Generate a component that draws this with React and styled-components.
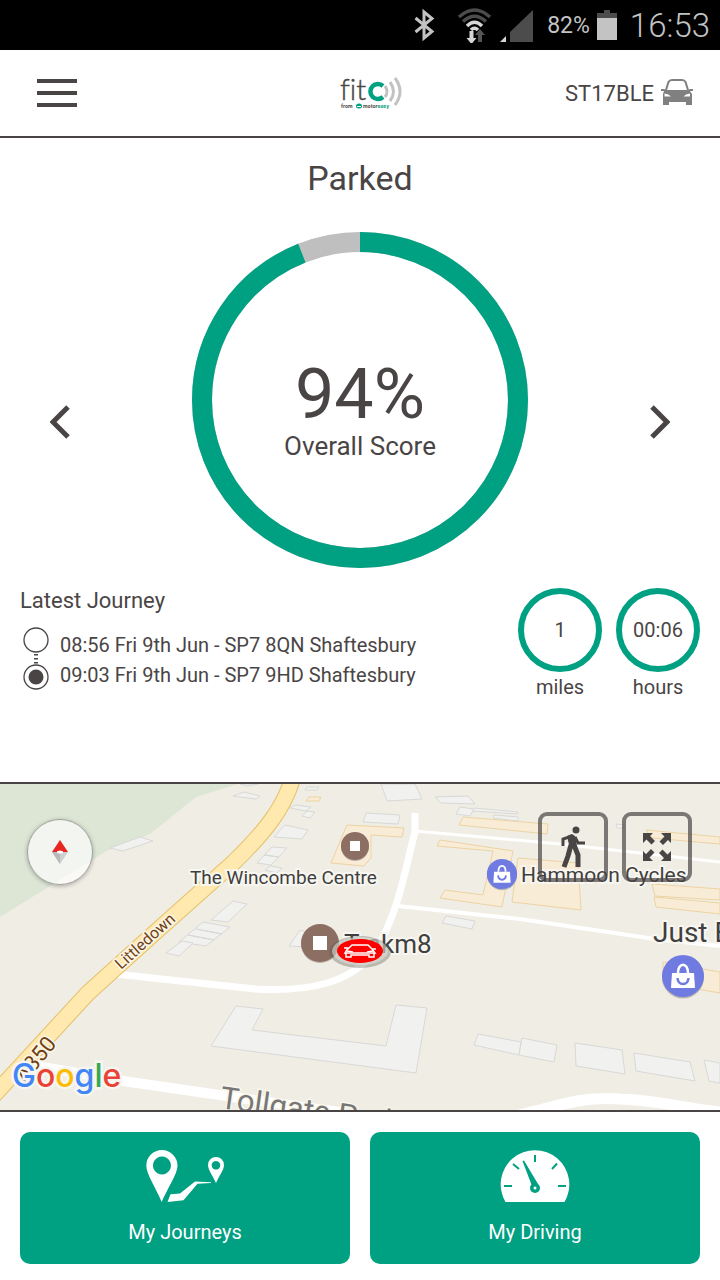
import React from "react";
import styled, { createGlobalStyle } from "styled-components";

const green = "#00a082";
const dark = "#4a4545";
const score = 94;

const journey = [
  "08:56 Fri 9th Jun - SP7 8QN Shaftesbury",
  "09:03 Fri 9th Jun - SP7 9HD Shaftesbury",
];

const stats = [
  { value: "1", label: "miles" },
  { value: "00:06", label: "hours" },
];

const greyBuildings = [
  "110,848 140,837 153,841 123,851",
  "233,796 244,792 260,796 256,799",
  "240,784 247,786 258,784",
  "305,790 307,787 319,787 317,790",
  "290,808 295,805 311,807 306,811",
  "302,816 307,811 315,812 310,818",
  "274,837 285,825 308,830 302,839",
  "257,863 272,847 287,848 271,865",
  "264,855 279,857",
  "265,870 270,866 282,868 277,873",
  "211,920 233,901 247,904 228,922",
  "179,942 203,922 230,927 206,946",
  "196,929 222,934",
  "188,935 214,940",
  "166,953 182,941 193,943 179,956",
  "381,784 415,784 422,799 387,801",
  "435,797 441,803 475,804 468,796",
  "363,822 366,813 400,815 398,824",
  "456,814 460,807 474,809 470,816",
  "474,808 518,812 518,814 473,811",
  "493,818 494,815 518,817 518,821",
  "616,824 624,825 624,828 617,828",
  "442,923 446,916 475,921 472,929",
  "289,946 300,930 312,934 309,947",
  "211,1046 236,1006 263,1009 252,1030 386,1046 396,1005 427,1008 416,1073",
  "474,1045 478,1034 521,1042 519,1055",
  "519,1055 522,1038 557,1045 554,1062",
  "576,1066 575,1043 622,1050 625,1074",
  "636,1071 634,1053 690,1062 695,1081",
  "709,1081 704,1060 720,1063 720,1083",
];

const shopBuildings = [
  "306,801 309,797 321,797 319,801",
  "331,863 347,825 404,828 402,837 371,835 371,858 364,866",
  "459,825 463,817 548,824 547,834",
  "437,846 440,840 513,851 502,907 440,898 445,890 483,895 493,851",
  "512,902 518,858 578,863 581,910",
  "646,830 720,837 720,844 652,838",
  "652,884 720,889 720,900 655,896",
  "654,897 720,903 720,914 656,907",
  "663,962 720,972 720,993 663,983",
];

const googleLetters = [
  ["G", "#4285f4"],
  ["o", "#ea4335"],
  ["o", "#fbbc05"],
  ["g", "#4285f4"],
  ["l", "#34a853"],
  ["e", "#ea4335"],
];

const StatusIcons = () => (
  <svg width="120" height="36" viewBox="0 0 120 36" aria-hidden="true">
    <path
      d="M1.500 11 L18 24.500 L10 31 V5 L18 11.500 L1.500 25"
      fill="none"
      stroke="#c3c3c3"
      strokeWidth="3"
    />
    <g fill="none" strokeWidth="3.500">
      <path d="M45 10 Q60.500 -4 76 10" stroke="#4c4c4c" />
      <path d="M49 14.500 Q60.500 4 72 14.500" stroke="#4c4c4c" />
      <path d="M53 19 Q60.500 11.500 68 19" stroke="#d6d6d6" />
      <path d="M57 23 Q60.500 19.500 64 23" stroke="#d6d6d6" />
    </g>
    <path d="M55.500 24 h4 v7 h3 l-5 6 l-5 -6 h3z" fill="#d6d6d6" />
    <path d="M64 35 h4 v-7 h3 l-5 -6 l-5 6 h3z" fill="#555" />
    <path d="M96 35 V25 L119 3 V35z" fill="#4c4c4c" />
    <path d="M86 35 L92 29 V35z" fill="#d6d6d6" />
  </svg>
);

const Logo = () => (
  <LogoSvg viewBox="0 0 62 36" role="img" aria-label="fit C from motoreasy">
    <LogoName x="0" y="25" stroke={dark} strokeWidth="0.4">
      fit
    </LogoName>
    <path d="M43 11 A7.500 7.500 0 1 0 43 22" fill="none" stroke={green} strokeWidth="4.500" />
    <g fill="none" stroke="#c2c2c2" strokeWidth="3">
      <path d="M45 11 Q49 16.500 45 22" />
      <path d="M50 7 Q57 16.500 50 26" />
      <path d="M55 3 Q65 16.500 55 30" />
    </g>
    <LogoTag x="1" y="33">
      from
    </LogoTag>
    <ellipse cx="19" cy="31" rx="3" ry="2.500" fill={green} />
    <path d="M17 31.500 h4" stroke="#fff" strokeWidth="1" />
    <LogoTag x="23" y="33">
      motor<tspan fill={green}>easy</tspan>
    </LogoTag>
  </LogoSvg>
);

const CarIcon = () => (
  <svg width="32" height="28" viewBox="0 0 32 28" aria-hidden="true">
    <path
      d="M5 11 L7.500 3 Q8.500 1 11 1 H21 Q23.500 1 24.500 3 L27 11"
      fill="none"
      stroke="#808080"
      strokeWidth="2"
    />
    <path
      fillRule="evenodd"
      fill="#808080"
      d="M0 10 L3 10 L5 11 H27 L29 10 L32 10 V12 H29 L31 15 V26 H25 V23 H8 V26 H2 V15 L3 12 H0z M3.500 14.500 V17.500 H10 Q8 15 3.500 14.500z M29 14.500 V17.500 H22.500 Q24.500 15 29 14.500z"
    />
  </svg>
);

const JourneysIcon = () => (
  <svg width="78" height="52" viewBox="0 0 78 52" fill="#fff" aria-hidden="true">
    <path
      fillRule="evenodd"
      d="M16 0 A15.700 15.700 0 0 0 0.300 15.700 C0.300 24 10 38 15.700 52 C21.500 38 31.500 24 31.500 15.700 A15.700 15.700 0 0 0 16 0z M16 6.500 A9 9 0 1 1 15.900 6.500z"
    />
    <path
      fillRule="evenodd"
      d="M70 7 A8 8 0 0 0 62 15 C62 20 67 26 70 33 C73 26 78 20 78 15 A8 8 0 0 0 70 7z M70 11 A4.300 4.300 0 1 1 69.900 11z"
    />
    <path d="M21.500 52 L24.500 44.300 L34 43.500 L49 31.500 L65 32.300 V33 L51.500 33.700 L37.500 50.300z" />
  </svg>
);

const DrivingIcon = () => (
  <svg width="70" height="52" viewBox="0 0 70 52" aria-hidden="true">
    <path d="M5.500 52 A34.300 34.300 0 1 1 64.500 52z" fill="#fff" />
    <g stroke={green} strokeWidth="2">
      <path d="M35 5 V12 M4 36 H12 M58 36 H66 M13 14 L19 19 M57 13.500 L52 19" />
    </g>
    <path d="M22.500 11 L24 10.500 L38 34 L32 36z" fill={green} />
    <circle cx="35" cy="38" r="5" fill={green} />
    <circle cx="35" cy="38" r="1.500" fill="#fff" />
  </svg>
);

const Bag = ({ x, y, scale }) => (
  <g transform={`translate(${x} ${y}) scale(${scale})`}>
    <circle cy="1.500" r="21" fill="#b9b6b0" />
    <circle r="21" fill="#6f7be0" />
    <path d="M-11 -3 H11 L12 12 H-12z" fill="#fff" />
    <path d="M-5 -3 C-5 -14 5 -14 5 -3" fill="none" stroke="#fff" strokeWidth="2.500" />
    <path d="M-5.500 2 Q-5 8 0 8 Q5 8 5.500 2" fill="none" stroke="#6f7be0" strokeWidth="2.500" />
  </g>
);

const Place = ({ x, y, r, size }) => (
  <g>
    <circle cx={x} cy={y + 1} r={r} fill="#b9b1ab" />
    <circle cx={x} cy={y} r={r} fill="#8d6e63" />
    <rect x={x - size / 2} y={y - size / 2} width={size} height={size} fill="#fff" />
  </g>
);

const MapView = () => (
  <MapSvg viewBox="0 784 720 326" preserveAspectRatio="xMidYMid slice">
    <rect y="784" width="720" height="326" fill="#efede4" />
    <path d="M0 784 H238 L196 797 L150 834 L108 850 L0 917z" fill="#dde6d5" />
    <g fill="#f1f1ef" stroke="#d8d8d6">
      {greyBuildings.map((points) => (
        <polygon key={points} points={points} />
      ))}
    </g>
    <g fill="#f9ecd6" stroke="#ecd3a2">
      {shopBuildings.map((points) => (
        <polygon key={points} points={points} />
      ))}
    </g>
    <g fill="none" stroke="#fff">
      <path
        d="M115 974 L255 989 C310 992 352 983 376 950 C400 910 407 860 415 832 V813"
        strokeWidth="7"
      />
      <path d="M415 831 L560 844 L720 862" strokeWidth="3" />
      <path d="M398 906 L520 919 L655 939 L720 946" strokeWidth="4" />
      <path d="M30 1065 L130 1082 L240 1098 L340 1112" strokeWidth="10" />
      <path d="M505 1118 C560 1107 575 1096 620 1099 C665 1101 675 1107 720 1112" strokeWidth="11" />
    </g>
    <path
      d="M292 780 C284 808 264 833 234 862 L160 928 L88 993 L-6 1095"
      fill="none"
      stroke="#e5c06a"
      strokeWidth="17"
    />
    <path
      d="M292 780 C284 808 264 833 234 862 L160 928 L88 993 L-6 1095"
      fill="none"
      stroke="#ffe9ae"
      strokeWidth="15"
    />
    <RoadName transform="translate(121 970) rotate(-42)" fontSize="16" fill="#703f12">
      Littledown
    </RoadName>
    <RoadName transform="translate(25 1084) rotate(-51)" fontSize="22" fill="#703f12">
      A350
    </RoadName>
    <RoadName transform="translate(219 1108) rotate(8)" fontSize="31" fill="#777">
      Tollgate Park
    </RoadName>

    <Place x={355} y={846} r={14} size={10} />
    <PlaceName x="190" y="884" fontSize="19">
      The Wincombe Centre
    </PlaceName>
    <Bag x={502} y={874} scale={0.72} />
    <PlaceName x="521" y="882" fontSize="21">
      Hammoon Cycles
    </PlaceName>
    <Bag x={683} y={976} scale={1} />
    <PlaceName x="653" y="942" fontSize="28">
      Just Eat
    </PlaceName>
    <Place x={320} y={943} r={19} size={14} />
    <PlaceName x="344" y="953" fontSize="26">
      Trakm8
    </PlaceName>

    <ellipse cx="360" cy="952" rx="31" ry="16" fill="#5a5a50" fillOpacity="0.350" />
    <ellipse cx="360" cy="951" rx="28" ry="14" fill="#e4e4dc" fillOpacity="0.550" />
    <ellipse cx="360" cy="951" rx="23" ry="12" fill="#f00" />
    <g fill="none" stroke="#fff" strokeWidth="1.500">
      <path d="M348 949 L352 945 H368 L372 949 M344 948 H348 L345 953 H375 L372 949 H376" />
      <path d="M346 953 V957 H351 V955 H369 V957 H374 V953 M347 951 L353 952 M373 951 L367 952" />
    </g>

    <GoogleName x="12" y="1087">
      {googleLetters.map(([letter, color], index) => (
        <tspan key={index} fill={color}>
          {letter}
        </tspan>
      ))}
    </GoogleName>
  </MapSvg>
);

const App = () => (
  <Page>
    <GlobalStyle />
    <StatusBar>
      <StatusIcons />
      <Battery>82%</Battery>
      <svg width="20" height="30" viewBox="0 0 20 30" aria-hidden="true">
        <path d="M7 0 H13 V3 H20 V8 H0 V3 H7z" fill="#4c4c4c" />
        <path d="M0 8 H20 V30 H0z" fill="#c3c3c3" />
      </svg>
      <Clock>16:53</Clock>
    </StatusBar>

    <Header>
      <PlainButton aria-label="Menu">
        <svg width="40" height="28" viewBox="0 0 40 28">
          <path d="M0 2 H40 M0 14 H40 M0 26 H40" stroke={dark} strokeWidth="4" />
        </svg>
      </PlainButton>
      <Logo />
      <Vehicle>
        ST17BLE
        <CarIcon />
      </Vehicle>
    </Header>

    <Title>Parked</Title>

    <ScoreRow>
      <Arrow aria-label="Previous">
        <svg width="20" height="34" viewBox="0 0 20 34">
          <path d="M18 2 L3 17 L18 32" fill="none" stroke={dark} strokeWidth="5" />
        </svg>
      </Arrow>
      <Ring>
        <RingSvg viewBox="0 0 336 336" aria-hidden="true">
          <g fill="none" strokeWidth="20" transform="rotate(-90 168 168)">
            <circle cx="168" cy="168" r="158" stroke="#bfbfbf" />
            <circle
              cx="168"
              cy="168"
              r="158"
              stroke={green}
              pathLength="100"
              strokeDasharray={`${score} 100`}
            />
          </g>
        </RingSvg>
        <ScoreText>
          <ScoreValue>{score}%</ScoreValue>
          <ScoreLabel>Overall Score</ScoreLabel>
        </ScoreText>
      </Ring>
      <Arrow aria-label="Next">
        <svg width="20" height="34" viewBox="0 0 20 34">
          <path d="M2 2 L17 17 L2 32" fill="none" stroke={dark} strokeWidth="5" />
        </svg>
      </Arrow>
    </ScoreRow>

    <Latest>
      <div>
        <LatestTitle>Latest Journey</LatestTitle>
        <Route>
          <svg width="28" height="66" viewBox="0 0 28 66" fill="none" stroke={dark} aria-hidden="true">
            <circle cx="14" cy="14" r="12" strokeWidth="1.300" />
            <path d="M14 28 V38" strokeWidth="4" strokeDasharray="1.500 2.500" />
            <circle cx="14" cy="51" r="12" strokeWidth="1.300" />
            <circle cx="14" cy="51" r="7.500" fill={dark} stroke="none" />
          </svg>
          <Stops>
            {journey.map((stop) => (
              <li key={stop}>{stop}</li>
            ))}
          </Stops>
        </Route>
      </div>
      <Stats>
        {stats.map((stat) => (
          <Stat key={stat.label}>
            <StatRing>{stat.value}</StatRing>
            {stat.label}
          </Stat>
        ))}
      </Stats>
    </Latest>

    <MapPanel>
      <MapView />
      <Compass aria-label="Compass">
        <svg width="16" height="24" viewBox="0 0 16 24">
          <path d="M8 0 L16 12 H0z" fill="#e8251f" />
          <path d="M8 24 L16 12 H0z" fill="#cfcfcf" />
          <path d="M8 24 V12 H0z" fill="#b9b9b9" />
          <ellipse cx="8" cy="12" rx="3" ry="1.500" fill="#fff" />
        </svg>
      </Compass>
      <MapTools>
        <MapButton aria-label="Walk to vehicle">
          <svg width="26" height="42" viewBox="0 0 26 42" fill="none" stroke={dark}>
            <circle cx="16" cy="4" r="3.500" fill={dark} stroke="none" />
            <path d="M7 10 L12 8 L15 10 L17 21 L10 23z" fill={dark} stroke="none" />
            <path d="M12 10 L3 13 V20" strokeWidth="3" />
            <path d="M15 11 L18 17 H25" strokeWidth="3" />
            <path d="M11 19 L8 30 L4 41" strokeWidth="5" />
            <path d="M14 19 L18 29 V41" strokeWidth="5" />
          </svg>
        </MapButton>
        <MapButton aria-label="Full screen">
          <svg width="30" height="30" viewBox="0 0 30 30" fill={dark}>
            {[0, 90, 180, 270].map((angle) => (
              <path
                key={angle}
                transform={`rotate(${angle} 15 15)`}
                d="M1 1 H11 L8 4 L13 9 L9.500 12.500 L4.500 7.500 L1 11z"
              />
            ))}
          </svg>
        </MapButton>
      </MapTools>
    </MapPanel>

    <Actions>
      <Action>
        <JourneysIcon />
        My Journeys
      </Action>
      <Action>
        <DrivingIcon />
        My Driving
      </Action>
    </Actions>
  </Page>
);

const GlobalStyle = createGlobalStyle`
  * {
    box-sizing: border-box;
  }

  body {
    margin: 0;
    background: #fff;
    color: ${dark};
    font-family: Roboto, "Liberation Sans", sans-serif;
  }

  svg {
    display: block;
    flex-shrink: 0;
  }

  button {
    padding: 0;
    border: 0;
    background: none;
    color: inherit;
    font-family: inherit;
    cursor: pointer;
  }
`;

const Page = styled.div`
  display: flex;
  flex-direction: column;
  min-height: 100vh;
`;

const StatusBar = styled.div`
  display: flex;
  align-items: center;
  justify-content: flex-end;
  height: 50px;
  padding: 0 10px;
  background: #000;
  color: #c3c3c3;
`;

const Battery = styled.span`
  margin: 0 7px 0 13px;
  font-size: 23px;
`;

const Clock = styled.span`
  margin-left: 13px;
  font-size: 33px;
  font-weight: 300;
`;

const Header = styled.header`
  display: grid;
  grid-template-columns: 1fr auto 1fr;
  align-items: center;
  height: 88px;
  padding: 0 27px 0 37px;
  border-bottom: 2px solid ${dark};
`;

const PlainButton = styled.button`
  justify-self: start;
`;

const LogoSvg = styled.svg`
  width: 62px;
  height: 36px;
  margin-left: 12px;
  overflow: visible;
`;

const LogoName = styled.text`
  fill: ${dark};
  font-family: Lato, sans-serif;
  font-size: 29px;
  font-weight: 300;
  font-variant-ligatures: none;
`;

const LogoTag = styled.text`
  fill: ${dark};
  font-family: Inter, sans-serif;
  font-size: 5px;
  font-weight: 700;
`;

const Vehicle = styled.div`
  display: flex;
  align-items: center;
  justify-self: end;
  gap: 7px;
  font-size: 22px;
`;

const Title = styled.h1`
  margin: 20px 0 34px;
  font-size: 34px;
  font-weight: 400;
  line-height: 40px;
  text-align: center;
`;

const ScoreRow = styled.section`
  display: flex;
  align-items: center;
  justify-content: space-between;
  padding: 0 50px;
`;

const Arrow = styled.button`
  margin-top: 44px;
`;

const Ring = styled.div`
  display: grid;
  place-items: center;

  > * {
    grid-area: 1 / 1;
  }
`;

const RingSvg = styled.svg`
  width: 336px;
  height: 336px;
`;

const ScoreText = styled.div`
  padding-top: 20px;
  text-align: center;
`;

const ScoreValue = styled.div`
  font-size: 70px;
  line-height: 72px;
`;

const ScoreLabel = styled.div`
  font-size: 26px;
  line-height: 32px;
`;

const Latest = styled.section`
  display: flex;
  justify-content: space-between;
  padding: 20px 20px 80px;
`;

const LatestTitle = styled.h2`
  margin: 0 0 12px;
  font-size: 22px;
  font-weight: 400;
  line-height: 26px;
`;

const Route = styled.div`
  display: flex;
  gap: 10px;
  padding-left: 2px;
`;

const Stops = styled.ul`
  margin: 4px 0 0;
  padding: 0;
  list-style: none;
  font-size: 20px;
  line-height: 30px;
`;

const Stats = styled.div`
  display: flex;
  gap: 14px;
`;

const Stat = styled.div`
  font-size: 20px;
  line-height: 30px;
  text-align: center;
`;

const StatRing = styled.div`
  display: flex;
  align-items: center;
  justify-content: center;
  width: 84px;
  height: 84px;
  border: 6px solid ${green};
  border-radius: 50%;
`;

const MapPanel = styled.section`
  position: relative;
  flex: 1;
  display: flex;
  min-height: 330px;
  border: solid ${dark};
  border-width: 2px 0;
`;

const MapSvg = styled.svg`
  width: 100%;
  height: auto;
`;

const RoadName = styled.text`
  stroke: #faf6ea;
  stroke-width: 3px;
  paint-order: stroke;
`;

const PlaceName = styled.text`
  fill: #3f3f3f;
  stroke: #f8f6f0;
  stroke-width: 4px;
  paint-order: stroke;
`;

const GoogleName = styled.text`
  font-family: Inter, sans-serif;
  font-size: 32px;
  font-weight: 500;
  stroke: #f7f5f0;
  stroke-width: 5px;
  paint-order: stroke;
`;

const Compass = styled.button`
  position: absolute;
  top: 35px;
  left: 27px;
  display: flex;
  align-items: center;
  justify-content: center;
  width: 66px;
  height: 66px;
  && {
    border: 1px solid #a0a09c;
    background: rgba(255, 255, 255, 0.65);
  }
  border-radius: 50%;
  box-shadow: 0 1px 4px rgba(0, 0, 0, 0.3);
`;

const MapTools = styled.div`
  position: absolute;
  top: 28px;
  right: 28px;
  display: flex;
  gap: 14px;
`;

const MapButton = styled.button`
  display: flex;
  align-items: center;
  justify-content: center;
  width: 70px;
  height: 70px;
  && {
    border: 4px solid rgba(74, 69, 69, 0.7);
  }
  border-radius: 9px;
`;

const Actions = styled.nav`
  display: flex;
  gap: 20px;
  padding: 20px 20px 16px;
`;

const Action = styled.button`
  flex: 1;
  display: flex;
  flex-direction: column;
  align-items: center;
  gap: 18px;
  && {
    padding: 18px 0 20px;
    background: ${green};
    color: #fff;
  }
  border-radius: 10px;
  font-size: 20px;
  line-height: 24px;
`;

export default App;
